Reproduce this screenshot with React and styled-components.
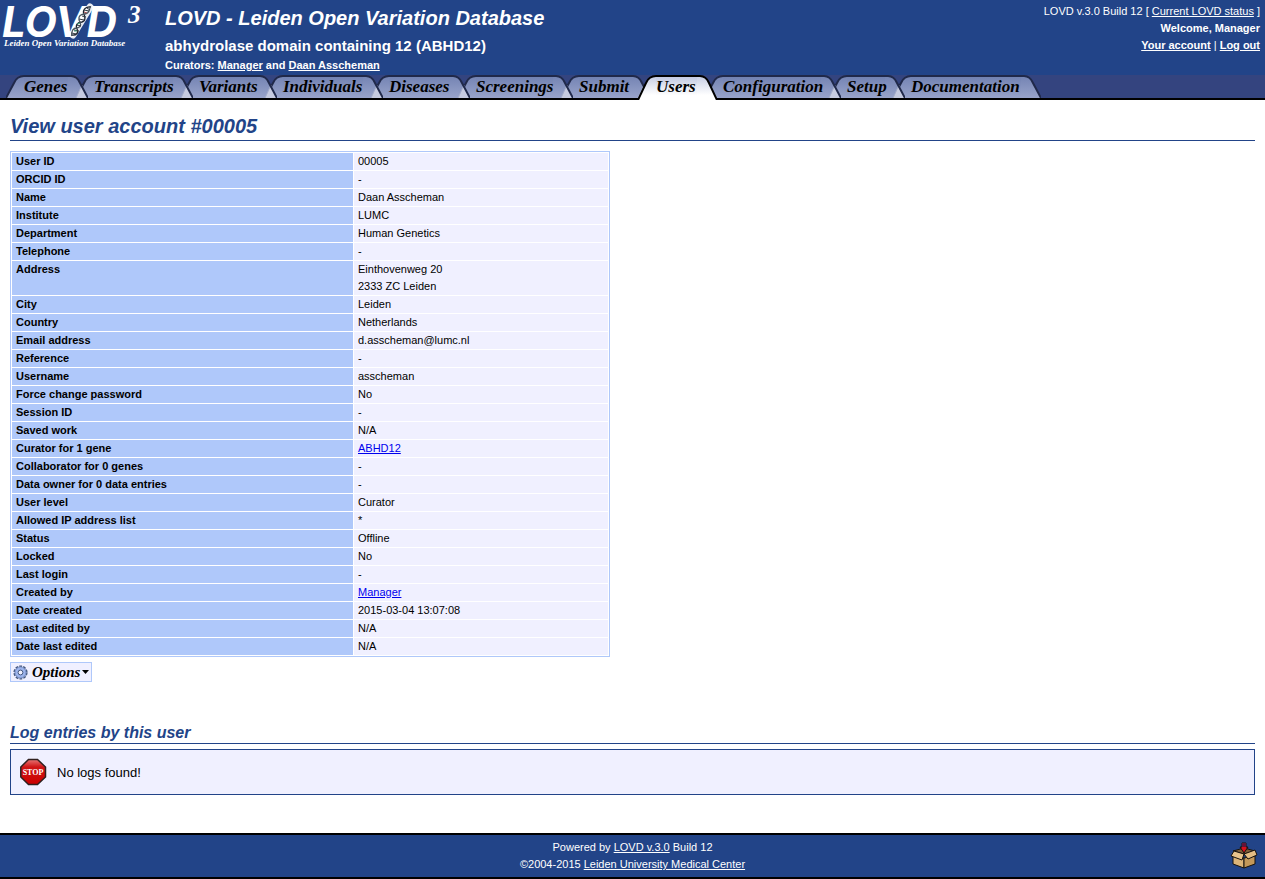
import React from "react";
import styled, { createGlobalStyle, css } from "styled-components";

const navy = "#224488";
const sans = '"Liberation Sans", Arial, Helvetica, sans-serif';
const serif = '"Liberation Serif", "Times New Roman", serif';

const GlobalStyle = createGlobalStyle`
  body {
    margin: 0;
    background: #fff;
    color: #000;
    font: 11px/17px ${sans};
  }
`;

const Header = styled.header`
  display: flex;
  height: 75px;
  background: ${navy};
  color: #fff;
`;

const LogoLink = styled.a`
  flex: 0 0 165px;
`;

const Titles = styled.div`
  flex: 1;
  font-weight: bold;
`;

const SiteTitle = styled.h1`
  margin: 0;
  padding-top: 5px;
  font-size: 20px;
  line-height: 26px;
  font-style: italic;
`;

const GeneTitle = styled.h2`
  margin: 0;
  padding-top: 6px;
  font-size: 15px;
  line-height: 18px;
`;

const Curators = styled.p`
  margin: 0;
  padding-top: 2px;
`;

const LightLink = styled.a`
  color: #fff;
`;

const Account = styled.div`
  padding: 3px 5px 0 0;
  text-align: right;
`;

const TabBar = styled.nav`
  display: flex;
  height: 23px;
  padding-left: 6px;
  background: #34447f;
  border-bottom: 2px solid #000;
`;

const Tab = styled.a`
  position: relative;
  display: flex;
  flex: 0 0 ${(p) => p.$width}px;
  min-width: 0;
  height: ${(p) => (p.$active ? 25 : 23)}px;
  z-index: ${(p) => (p.$active ? 20 : p.$level)};
  margin-right: -12px;
  color: #000;
  text-decoration: none;
`;

const TabLabel = styled.span`
  position: relative;
  z-index: 1;
  flex: 1;
  min-width: 0;
  box-sizing: border-box;
  border-top: 2px solid #20294a;
  background: linear-gradient(#7282b2, #98a3ca);
  font: italic bold 17px/20px ${serif};
  white-space: nowrap;
  ${(p) =>
    p.$active &&
    css`
      border-color: #000;
      background: linear-gradient(#c3cae2, #fff 80%);
    `}
`;

const Cap = styled.svg`
  flex: none;
  display: block;
`;

const Main = styled.main`
  padding: 14px 10px 38px;
`;

const PageHeading = styled.h2`
  margin: 0 0 10px;
  padding-bottom: 2px;
  border-bottom: 1px solid ${navy};
  color: ${navy};
  font-size: 20px;
  line-height: 24px;
  font-style: italic;
`;

const SectionHeading = styled.h3`
  margin: 40px 0 5px;
  border-bottom: 1px solid ${navy};
  color: ${navy};
  font-size: 16px;
  line-height: 21px;
  font-style: italic;
`;

const DataTable = styled.table`
  width: 600px;
  max-width: 100%;
  border: 1px solid #afc8fa;
  border-spacing: 1px;
  table-layout: fixed;
`;

const FieldName = styled.th`
  box-sizing: border-box;
  width: 341px;
  padding: 0 4px;
  background: #afc8fa;
  text-align: left;
  vertical-align: top;
`;

const FieldValue = styled.td`
  padding: 0 4px;
  background: #f0f0ff;
  white-space: pre-line;
`;

const DataLink = styled.a`
  color: #0000ee;
`;

const OptionsButton = styled.button`
  display: flex;
  align-items: center;
  height: 20px;
  margin-top: 5px;
  padding: 0 2px;
  border: 1px solid #afc8fa;
  background: #f0f0ff;
  color: #000;
  font: italic bold 15px/18px ${serif};
`;

const OptionsText = styled.span`
  padding: 0 2px 0 4px;
`;

const Notice = styled.div`
  display: flex;
  align-items: center;
  gap: 10px;
  height: 44px;
  padding: 0 9px;
  border: 1px solid ${navy};
  background: #f0f0ff;
  font-size: 13px;
`;

const Footer = styled.footer`
  display: grid;
  grid-template-columns: 35px 1fr 35px;
  align-items: center;
  height: 42px;
  border: solid #000;
  border-width: 2px 0;
  background: ${navy};
  color: #fff;
  text-align: center;
`;

const FooterText = styled.p`
  grid-column: 2;
  margin: 0;
`;

const UpdateLink = styled.a`
  display: flex;
`;

const tabs = [
  ["Genes", 82],
  ["Transcripts", 117],
  ["Variants", 96],
  ["Individuals", 118],
  ["Diseases", 99],
  ["Screenings", 115],
  ["Submit", 89],
  ["Users", 79],
  ["Configuration", 136],
  ["Setup", 76],
  ["Documentation", 148],
];

const fields = [
  ["User ID", "00005"],
  ["ORCID ID", "-"],
  ["Name", "Daan Asscheman"],
  ["Institute", "LUMC"],
  ["Department", "Human Genetics"],
  ["Telephone", "-"],
  ["Address", "Einthovenweg 20\n2333 ZC Leiden"],
  ["City", "Leiden"],
  ["Country", "Netherlands"],
  ["Email address", "d.asscheman@lumc.nl"],
  ["Reference", "-"],
  ["Username", "asscheman"],
  ["Force change password", "No"],
  ["Session ID", "-"],
  ["Saved work", "N/A"],
  ["Curator for 1 gene", "ABHD12", true],
  ["Collaborator for 0 genes", "-"],
  ["Data owner for 0 data entries", "-"],
  ["User level", "Curator"],
  ["Allowed IP address list", "*"],
  ["Status", "Offline"],
  ["Locked", "No"],
  ["Last login", "-"],
  ["Created by", "Manager", true],
  ["Date created", "2015-03-04 13:07:08"],
  ["Last edited by", "N/A"],
  ["Date last edited", "N/A"],
];

function Logo() {
  return (
    <svg width="150" height="52" viewBox="0 0 150 52" role="img" aria-label="LOVD 3">
      <g fill="#fff">
        <text x="2" y="37" fontFamily="Inter, sans-serif" fontSize="42" fontWeight="bold" fontStyle="italic">LOVD</text>
        <text x="128" y="23" fontFamily="Liberation Serif, serif" fontSize="25" fontWeight="bold" fontStyle="italic">3</text>
        <text x="4" y="46" fontFamily="Liberation Serif, serif" fontSize="9" fontWeight="bold" fontStyle="italic">Leiden Open Variation Database</text>
      </g>
      <path d="M73 35 L90 7" stroke="#fff" strokeWidth="7" strokeLinecap="round" opacity="0.9" />
      <g fill="none" strokeWidth="1.3">
        <path d="M71 35 C77 36 79 32 77 29 C75 25 78 22 82 22 C86 21 85 17 84 14 C82 10 86 6 91 7" stroke="#1d2430" />
        <path d="M72 36 C71 31 73 28 77 28 C82 27 81 23 79 20 C78 16 81 14 85 14 C90 13 90 9 90 6" stroke="#4a5660" />
        <path d="M72 33 L76 34 M74 30 L79 31 M77 25 L81 26 M79 19 L84 20 M82 16 L86 17 M84 10 L89 11 M87 8 L90 10" stroke="#333a42" strokeWidth="1" />
        <path d="M77 24 L80 23 M74 31 L77 31" stroke="#3b9a7a" strokeWidth="1" />
        <path d="M84 12 L87 13" stroke="#a55" strokeWidth="1" />
      </g>
    </svg>
  );
}

function TabCap({ side, active, joined }) {
  const id = `cap-${side}-${active ? "active" : "plain"}`;
  const height = active ? 25 : 23;
  const left = side === "left";
  const shape = left
    ? `M0 ${height} L8 8 Q11 1 18 1`
    : `M0 1 H3 Q9 1 12 8 L20 ${height}`;
  const body = left ? `${shape} V${height} Z` : `${shape} V${height} H0 V1 Z`;
  return (
    <Cap width={left ? 18 : 20} height={height} aria-hidden="true">
      <defs>
        <linearGradient id={id} gradientUnits="userSpaceOnUse" x1="0" y1="0" x2="0" y2={height}>
          <stop offset="0" stopColor={active ? "#c3cae2" : "#7282b2"} />
          <stop offset={active ? "0.8" : "1"} stopColor={active ? "#fff" : "#98a3ca"} />
        </linearGradient>
      </defs>
      <path d={body} fill={`url(#${id})`} />
      {joined && <path d="M8 23 L14 10 L20 23 Z" fill="#c6cbe0" />}
      {joined && <path d="M8 23 L14 10" stroke="#a3acc9" />}
      <path d={shape} fill="none" stroke={active ? "#000" : "#20294a"} strokeWidth="2" />
    </Cap>
  );
}

function Gear() {
  return (
    <svg width="15" height="15" viewBox="0 0 15 15" aria-hidden="true">
      <circle cx="7.5" cy="7.5" r="6.4" fill="none" stroke="#44577f" strokeWidth="1.4" strokeDasharray="2.8 1.22" />
      <circle cx="7.5" cy="7.5" r="5.6" fill="#9db4ec" stroke="#5b72a8" strokeWidth="0.8" />
      <circle cx="7.5" cy="7.5" r="2.4" fill="#f0f0ff" stroke="#44577f" />
    </svg>
  );
}

function StopSign() {
  return (
    <svg width="27" height="28" viewBox="0 0 27 28" role="img" aria-label="Stop">
      <defs>
        <linearGradient id="stop-red" x1="0" y1="0" x2="0" y2="1">
          <stop offset="0" stopColor="#e87575" />
          <stop offset="0.3" stopColor="#cf1515" />
          <stop offset="1" stopColor="#c00" />
        </linearGradient>
      </defs>
      <path d="M8.5 1.5 H17.5 L25.5 9 V19 L17.5 26.5 H8.5 L0.8 19 V9 Z" fill="url(#stop-red)" stroke="#30201f" strokeWidth="1.5" />
      <text x="13" y="17" fill="#fff" fontFamily="Liberation Serif, serif" fontSize="8" fontWeight="bold" textAnchor="middle">STOP</text>
    </svg>
  );
}

function Package() {
  return (
    <svg width="28" height="28" viewBox="0 0 28 28" aria-hidden="true">
      <g stroke="#17120c" strokeWidth="1" strokeLinejoin="round">
        <path d="M3 9 L14 6 L25 9 L14 12 Z" fill="#80603a" />
        <path d="M3 14 L14 16 V26 L3 22 Z" fill="#dcb478" />
        <path d="M25 14 L14 16 V26 L25 22 Z" fill="#c39859" />
        <path d="M4 9 L14 12 L12 18 L1 14 Z" fill="#e9c48c" />
        <path d="M25 8 L14 12 L18 17 L27 13 Z" fill="#e3bd84" />
        <path d="M12 1 H16 V5 H18 L14 11 L10 5 H12 Z" fill="#d5101c" />
      </g>
      <path d="M12 1 H16 V5 H12 Z" fill="#651337" />
    </svg>
  );
}

export default function App() {
  return (
    <>
      <GlobalStyle />
      <Header>
        <LogoLink href="#home"><Logo /></LogoLink>
        <Titles>
          <SiteTitle>LOVD - Leiden Open Variation Database</SiteTitle>
          <GeneTitle>abhydrolase domain containing 12 (ABHD12)</GeneTitle>
          <Curators>
            Curators: <LightLink href="#manager">Manager</LightLink> and{" "}
            <LightLink href="#asscheman">Daan Asscheman</LightLink>
          </Curators>
        </Titles>
        <Account>
          LOVD v.3.0 Build 12 [ <LightLink href="#status">Current LOVD status</LightLink> ]<br />
          <b>Welcome, Manager</b><br />
          <LightLink href="#account"><b>Your account</b></LightLink> |{" "}
          <LightLink href="#logout"><b>Log out</b></LightLink>
        </Account>
      </Header>
      <TabBar>
        {tabs.map(([name, width], i) => {
          const active = name === "Users";
          return (
            <Tab key={name} href={`#${name}`} $width={width} $active={active} $level={tabs.length - i} aria-current={active ? "page" : undefined}>
              <TabCap side="left" active={active} />
              <TabLabel $active={active}>{name}</TabLabel>
              <TabCap side="right" active={active} joined={!active && i < tabs.length - 1} />
            </Tab>
          );
        })}
      </TabBar>
      <Main>
        <PageHeading>View user account #00005</PageHeading>
        <DataTable>
          <tbody>
            {fields.map(([name, value, linked]) => (
              <tr key={name}>
                <FieldName scope="row">{name}</FieldName>
                <FieldValue>{linked ? <DataLink href={`#${value}`}>{value}</DataLink> : value}</FieldValue>
              </tr>
            ))}
          </tbody>
        </DataTable>
        <OptionsButton type="button">
          <Gear />
          <OptionsText>Options</OptionsText>
          <svg width="7" height="4" aria-hidden="true"><path d="M0 0 H7 L3.5 4 Z" /></svg>
        </OptionsButton>
        <SectionHeading>Log entries by this user</SectionHeading>
        <Notice>
          <StopSign />
          <span>No logs found!</span>
        </Notice>
      </Main>
      <Footer>
        <FooterText>
          Powered by <LightLink href="#lovd">LOVD v.3.0</LightLink> Build 12<br />
          ©2004-2015 <LightLink href="#lumc">Leiden University Medical Center</LightLink>
        </FooterText>
        <UpdateLink href="#update" aria-label="Update available"><Package /></UpdateLink>
      </Footer>
    </>
  );
}
